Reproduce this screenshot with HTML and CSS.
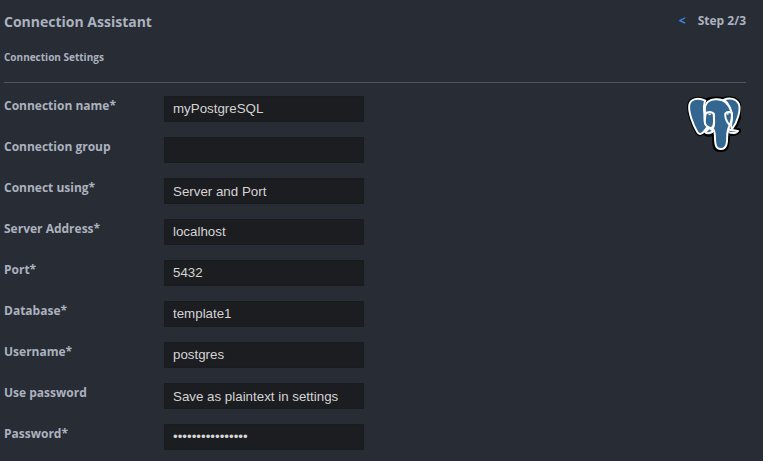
FILE: index.html
```html
<!DOCTYPE html>
<html lang="en">
<head>
<meta charset="utf-8">
<title>Connection Assistant</title>
<link rel="stylesheet" href="styles.css">
</head>
<body>
<main class="assistant">
  <header class="header">
    <h1 class="title">Connection Assistant</h1>
    <div class="steps"><a class="back" href="#" aria-label="Previous step">&lt;</a><span>Step 2/3</span></div>
  </header>
  <h2 class="subtitle">Connection Settings</h2>
  <div class="content">
    <form class="form">
      <label class="label" for="name">Connection name*</label>
      <input class="field" id="name" type="text" value="myPostgreSQL">
      <label class="label" for="group">Connection group</label>
      <input class="field" id="group" type="text">
      <label class="label" for="using">Connect using*</label>
      <select class="field select" id="using"><option>Server and Port</option></select>
      <label class="label" for="server">Server Address*</label>
      <input class="field" id="server" type="text" value="localhost">
      <label class="label" for="port">Port*</label>
      <input class="field" id="port" type="text" value="5432">
      <label class="label" for="database">Database*</label>
      <input class="field" id="database" type="text" value="template1">
      <label class="label" for="username">Username*</label>
      <input class="field" id="username" type="text" value="postgres">
      <label class="label" for="use-password">Use password</label>
      <select class="field select" id="use-password"><option>Save as plaintext in settings</option></select>
      <label class="label" for="password">Password*</label>
      <input class="field" id="password" type="password" value="abcdefghijklmnop">
    </form>
    <svg class="logo" viewBox="18 18 168 174" role="img" aria-label="PostgreSQL">
      <g class="outline">
        <path d="M75 32C52 22 29 26 25 46C22 68 37 109 50 130C56 140 65 137 71 129L77 122C69 134 76 139 88 138C95 137 100 134 102 130C104 148 101 169 107 180C113 189 133 188 140 178C146 168 143 148 147 134C158 138 173 135 179 128C182 121 170 124 161 123C176 102 190 65 181 43C172 25 151 22 131 29C112 23 94 25 75 32Z"/>
      </g>
      <g class="shape">
        <path d="M133 29C151 22 171 26 179 42C187 61 174 101 158 121C151 112 158 99 158 85C158 63 146 39 133 29Z"/>
        <path d="M75 32C52 22 29 26 25 46C22 68 37 109 50 130C56 140 65 136 71 128L82 114C71 105 72 91 72 75C70 57 69 43 75 32Z"/>
        <path d="M74 62C72 37 91 27 109 28C134 27 149 44 156 67C160 84 158 98 150 111C144 122 143 131 143 145C143 160 143 182 124 183C106 184 106 167 105 149C105 137 105 126 98 119C106 109 102 91 101 73C95 67 82 67 76 73Z"/>
        <path d="M76 73C82 67 95 67 101 73C101 87 105 103 98 114C92 122 79 113 74 104C72 94 75 84 76 73Z"/>
        <path d="M137 73C142 67 151 66 157 71C160 85 155 98 151 109C142 99 136 87 137 73Z"/>
      </g>
      <path class="tusk" d="M82 115C79 122 76 124 71 129C76 138 91 137 99 130C106 121 91 114 82 115ZM148 119C155 124 166 122 179 126C173 137 158 137 147 131Z"/>
      <path class="mouth" d="M79 130Q87 132 94 127Q91 121 86 122Q84 128 79 130ZM149 128Q160 132 172 128Q158 129 149 125Z"/>
      <path class="eyes" d="M83 73L91 72L92 77Q86 79 83 73ZM140 73L148 71L147 76Q143 78 140 73Z"/>
    </svg>
  </div>
</main>
</body>
</html>
```

FILE: styles.css
```css
* {
  box-sizing: border-box;
}

body {
  margin: 0;
  background: #282c34;
  color: #abb2bf;
  font-family: "Open Sans", "Noto Sans", sans-serif;
  font-size: 12px;
  font-weight: 700;
  line-height: 20px;
}

.assistant {
  padding: 10px 17px 11px 4px;
}

.header {
  display: flex;
  justify-content: space-between;
  align-items: flex-start;
}

.title {
  margin: 0;
  font-size: 14px;
  font-weight: 700;
  line-height: 24px;
}

.steps {
  display: flex;
  gap: 12px;
  line-height: 22px;
}

.back {
  color: #3b8eea;
  text-decoration: none;
}

.subtitle {
  margin: 0;
  padding: 13px 0 15px;
  border-bottom: 1px solid #50545b;
  font-size: 10px;
  font-weight: 700;
  line-height: 20px;
}

.content {
  display: flex;
  justify-content: space-between;
  align-items: flex-start;
  padding-top: 13px;
}

.form {
  display: grid;
  grid-template-columns: 160px 200px;
  row-gap: 15px;
}

.label {
  line-height: 20px;
}

.field {
  appearance: none;
  width: 100%;
  height: 26px;
  margin: 0;
  padding: 0 8px 2px;
  border: 1px solid #1a1b1f;
  border-radius: 0;
  background: #1c1d21;
  color: #d4d4d4;
  font-family: "Liberation Sans", Arial, sans-serif;
}

.select {
  padding-bottom: 0;
}

.logo {
  width: 54px;
  height: 56px;
  margin-right: 5px;
}

.outline {
  fill: #000;
  stroke: #000;
  stroke-width: 13;
  stroke-linejoin: round;
}

.shape {
  fill: #336791;
  stroke: #fff;
  stroke-width: 6;
  stroke-linejoin: round;
}

.tusk {
  fill: #fff;
  stroke: #fff;
  stroke-width: 3;
  stroke-linejoin: round;
}

.mouth {
  fill: #336791;
}

.eyes {
  fill: #fff;
}
```
